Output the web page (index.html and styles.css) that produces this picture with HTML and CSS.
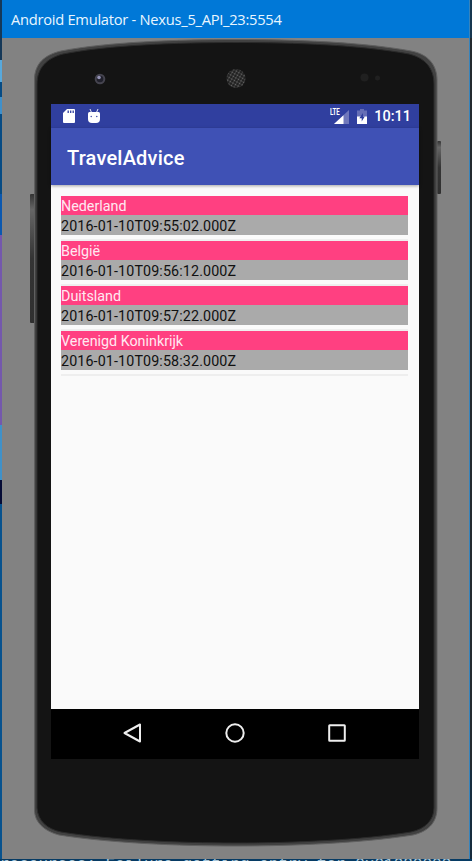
FILE: index.html
```html
<!DOCTYPE html>
<html lang="en">
<head>
<meta charset="utf-8">
<title>Android Emulator</title>
<link rel="stylesheet" href="styles.css">
</head>
<body>
<div class="desktop">
  <div class="strip strip-left"></div>
  <main class="window">
    <header class="titlebar">Android Emulator - Nexus_5_API_23:5554</header>
    <div class="stage">
      <svg class="shell" viewBox="0 38 468 821" width="468" height="821" aria-hidden="true">
        <defs>
          <pattern id="mesh" width="3" height="3" patternUnits="userSpaceOnUse" patternTransform="rotate(30)">
            <rect width="3" height="3" fill="#1b1b1b"/><circle cx="1.5" cy="1.5" r="0.95" fill="#686868"/>
          </pattern>
          <linearGradient id="key" x1="0" y1="0" x2="0" y2="1">
            <stop offset="0" stop-color="#333"/><stop offset=".12" stop-color="#666"/><stop offset=".5" stop-color="#343434"/><stop offset="1" stop-color="#303030"/>
          </linearGradient>
        </defs>
        <rect x="28" y="194" width="5" height="129" rx="1" fill="url(#key)"/>
        <rect x="435" y="141" width="4" height="53" rx="1" fill="url(#key)"/>
        <path class="rim" d="M32.500 810V80C32.500 64 42 55 59 51C105 42 175 39.500 234 39.500S360 42 409 51C426 54 435 65 435 80V808C435 821 428 831 411 835C360 843 292 846 234 846S108 843 57 835C42 831 32.500 822 32.500 810Z"/>
        <path class="face" d="M35 808V84C35 68 45 58 61 54C106 45 175 42.500 234 42.500S359 45 407 54C423 58 432 68 432 84V808C432 820 423 829 409 832C360 840 292 843 234 843S108 840 59 832C45 829 36 821 35 808Z"/>
        <circle cx="98" cy="79" r="5.300" fill="#45444f"/>
        <circle cx="98" cy="79" r="3.300" fill="#20202b"/>
        <circle cx="97" cy="77.500" r="1.800" fill="#9593b5"/>
        <circle cx="234" cy="78.500" r="9.500" fill="url(#mesh)"/>
        <circle cx="362.500" cy="77.500" r="4" fill="#202020"/>
        <circle cx="375.500" cy="78" r="2.500" fill="#202020"/>
      </svg>
      <section class="screen">
        <div class="statusbar">
          <svg class="sd" viewBox="0 0 12 14" width="12" height="14"><path fill="#fff" d="M4 0h7a1 1 0 0 1 1 1v12a1 1 0 0 1-1 1H1a1 1 0 0 1-1-1V4z"/><path stroke="#303f9f" stroke-width="1.300" d="M5.200 1.400V4M7.700 1.400V4M10.200 1.400V4"/></svg>
          <svg class="droid" viewBox="0 0 12 14" width="12" height="14"><path stroke="#fff" stroke-width=".9" d="M2 0l1.300 3M10 0L8.700 3"/><path fill="#fff" d="M0 4.500Q0 3 1.500 3H10.500Q12 3 12 4.500V10Q12 14 8 14H4Q0 14 0 10Z"/><circle cx="3.200" cy="7.500" r=".7" fill="#303f9f"/><circle cx="8.800" cy="7.500" r=".7" fill="#303f9f"/></svg>
          <span class="spacer"></span>
          <span class="lte">LTE</span>
          <svg class="signal" viewBox="0 0 15 14" width="15" height="14"><path fill="#7078bb" d="M15 0v14H0z"/><path fill="#fff" d="M9.500 5.200V14H0z"/></svg>
          <svg class="battery" viewBox="0 0 10 15" width="10" height="15"><path fill="#656eb6" d="M3 0h4v1.500h3V8H0V1.500h3z"/><path fill="#fff" d="M0 7.500h10V15H0z"/><path fill="#303f9f" d="M6 4L2.300 9.200H4.700V12.500L7.800 7.500H6z"/></svg>
          <span class="clock">10:11</span>
        </div>
        <h1 class="appbar">TravelAdvice</h1>
        <ul class="list">
          <li><div class="country">Nederland</div><div class="date">2016-01-10T09:55:02.000Z</div></li>
          <li><div class="country">België</div><div class="date">2016-01-10T09:56:12.000Z</div></li>
          <li><div class="country">Duitsland</div><div class="date">2016-01-10T09:57:22.000Z</div></li>
          <li><div class="country">Verenigd Koninkrijk</div><div class="date">2016-01-10T09:58:32.000Z</div></li>
        </ul>
        <nav class="navbar">
          <svg viewBox="0 0 22 22" width="22" height="22"><path d="M18 2.500V19.500L2.500 11Z"/></svg>
          <svg viewBox="0 0 22 22" width="22" height="22"><circle cx="11" cy="11" r="8.700"/></svg>
          <svg viewBox="0 0 22 22" width="22" height="22"><rect x="3.200" y="3.200" width="15.600" height="15.600" rx=".5"/></svg>
        </nav>
      </section>
    </div>
  </main>
  <div class="strip strip-right"></div>
  <footer class="console">resources: Failure getting entry for 0x01080009</footer>
</div>
</body>
</html>
```

FILE: styles.css
```css
* { box-sizing: border-box; }
body { margin: 0; font-family: Roboto, sans-serif; }
.desktop {
  display: grid;
  grid-template: 859px 2px / 2px 468px 2px;
  width: 472px;
  height: 861px;
  overflow: hidden;
}
.strip-left { background: linear-gradient(#153858 0 60px, #58a9dc 60px 82px, #064b84 82px 97px, #3f90cb 97px 114px, #064b84 114px 194px, #0b58af 194px 235px, #7458ad 235px 425px, #3f91c9 425px 480px, #050b35 480px 504px, #07528e 504px); }
.strip-right { background: linear-gradient(#173750 0 38px, #242a2f 38px 770px, #172c3d 770px); }
.window { display: flex; flex-direction: column; background: #828282; border-right: 1px solid #3784bc; }
.titlebar {
  height: 38px;
  padding-left: 9px;
  background: #0078d7;
  color: #e9f6ff;
  font: 14.700px/39px "Open Sans", sans-serif;
  letter-spacing: -.27px;
  white-space: nowrap;
}
.stage { position: relative; flex: 1; padding: 66px 0 0 49px; }
.shell { position: absolute; left: 0; top: 0; }
.rim { fill: #414141; stroke: #606060; stroke-width: 1; }
.face { fill: #141414; stroke: #2b2b2b; stroke-width: 1; }
.screen { position: relative; display: flex; flex-direction: column; width: 368px; height: 655px; background: #fafafa; }
.statusbar { display: flex; align-items: center; height: 24px; padding: 0 8px 0 12px; background: #303f9f; color: #fff; }
.droid { margin-left: 13px; }
.spacer { flex: 1; }
.lte { align-self: flex-start; margin: 4px -10px 0 0; font: 700 9px/9px Roboto, sans-serif; letter-spacing: -.2px; transform: scaleX(.68); transform-origin: 0 0; }
.signal { margin-top: 1px; }
.battery { margin-left: 8px; }
.clock { margin-left: 7px; font-size: 14.500px; font-weight: 500; line-height: 26px; padding-top: 1px; }
.appbar { height: 57px; margin: 0; padding-left: 16px; background: #3f51b5; color: #fff; font-size: 20px; font-weight: 500; line-height: 60px; letter-spacing: .2px; box-shadow: 0 1px 3px rgba(0,0,0,.35); }
.list { flex: 1; margin: 0; padding: 11px 11px 0 10px; list-style: none; }
.list li { height: 45px; border-bottom: 2px solid #eee; font-size: 14.300px; white-space: nowrap; }
.country { height: 19px; background: #ff4081; color: #ffe9f1; line-height: 20px; }
.date { height: 20px; background: #aaa; color: #111; line-height: 22px; letter-spacing: .12px; }
.navbar { display: flex; justify-content: space-between; align-items: center; height: 50px; padding: 0 71px; background: #000; }
.navbar svg { margin-top: -2px; fill: none; stroke: #eee; stroke-width: 2; stroke-linejoin: round; }
.console { grid-column: 1 / 4; overflow: hidden; background: #063b64; color: #a9c8dc; font: 16px/13px "Liberation Mono", monospace; white-space: nowrap; }
```
